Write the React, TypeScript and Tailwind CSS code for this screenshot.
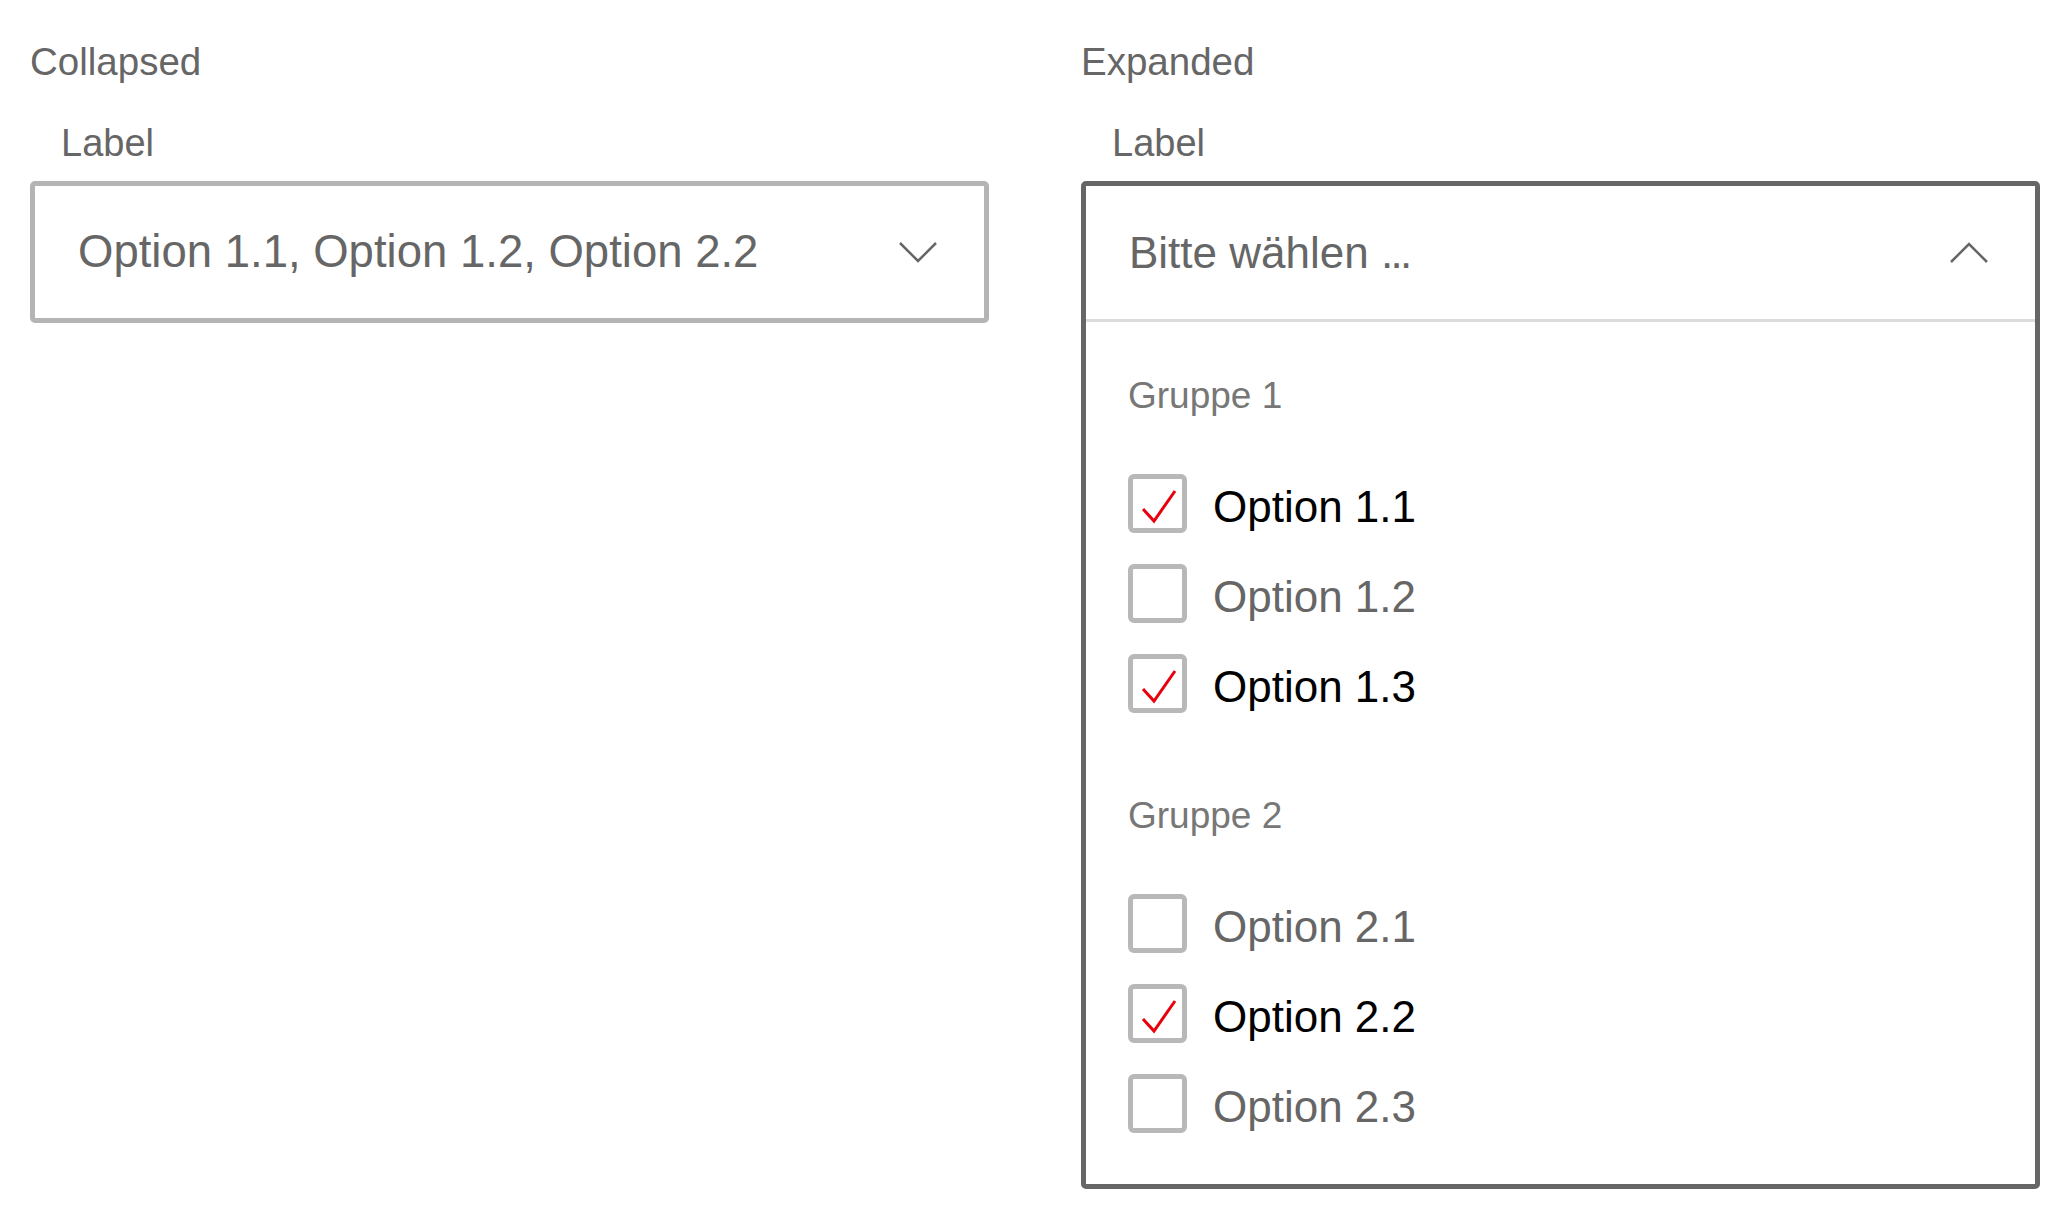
const groups = [
  {
    title: "Gruppe 1",
    options: [
      { label: "Option 1.1", checked: true },
      { label: "Option 1.2", checked: false },
      { label: "Option 1.3", checked: true },
    ],
  },
  {
    title: "Gruppe 2",
    options: [
      { label: "Option 2.1", checked: false },
      { label: "Option 2.2", checked: true },
      { label: "Option 2.3", checked: false },
    ],
  },
];

function Chevron({ up = false }: { up?: boolean }) {
  return (
    <svg width="40" height="24" viewBox="0 0 40 24" fill="none" className="shrink-0">
      <path
        d={up ? "M2 21 L20 3 L38 21" : "M2 3 L20 21 L38 3"}
        stroke="#666666"
        strokeWidth="2.5"
        strokeLinejoin="miter"
      />
    </svg>
  );
}

function Checkbox({ checked }: { checked: boolean }) {
  return (
    <div className="w-[59px] h-[59px] shrink-0 border-[5px] border-[#b8b8b8] rounded-[6px] bg-white">
      {checked && (
        <svg width="49" height="49" viewBox="0 0 49 49" fill="none">
          <polyline points="10,30 21,42 42,12" stroke="#e8000d" strokeWidth="3" />
        </svg>
      )}
    </div>
  );
}

export default function App() {
  return (
    <div className="min-h-screen bg-white font-['Liberation_Sans',Arial,sans-serif] flex gap-[92px] px-[30px] pt-[39px]">
      {/* Collapsed */}
      <div className="flex-1">
        <p className="text-[38.5px] leading-[46px] text-[#666]">Collapsed</p>
        <p className="mt-[35px] pl-[31px] text-[38px] leading-[46px] text-[#666]">Label</p>
        <div className="mt-[15px] h-[142px] border-[5px] border-[#b4b4b4] rounded-[5px] flex items-center justify-between pl-[43px] pr-[46px]">
          <span className="text-[45.5px] text-[#666]">Option 1.1, Option 1.2, Option 2.2</span>
          <Chevron />
        </div>
      </div>

      {/* Expanded */}
      <div className="flex-1">
        <p className="text-[38.5px] leading-[46px] text-[#666]">Expanded</p>
        <p className="mt-[35px] pl-[31px] text-[38px] leading-[46px] text-[#666]">Label</p>
        <div className="mt-[15px] border-[5px] border-[#666] rounded-[5px]">
          <div className="h-[133px] flex items-center justify-between pl-[43px] pr-[46px]">
            <span className="text-[44px] text-[#666]">
              Bitte wählen <span className="tracking-[-0.06em]">...</span>
            </span>
            <Chevron up />
          </div>
          <div className="h-[3px] bg-[#dcdcdc]" />
          <div className="pt-[52px] pb-[36px] pl-[42px] flex flex-col gap-[66px]">
            {groups.map((g) => (
              <div key={g.title}>
                <p className="text-[37px] leading-[44px] text-[#777] mb-[40px]">{g.title}</p>
                {g.options.map((o) => (
                  <div key={o.label} className="h-[90px] flex items-center gap-[26px]">
                    <Checkbox checked={o.checked} />
                    <span
                      className={
                        "text-[44px] leading-[52px] mt-[8px] " +
                        (o.checked ? "text-black" : "text-[#666]")
                      }
                    >
                      {o.label}
                    </span>
                  </div>
                ))}
              </div>
            ))}
          </div>
        </div>
      </div>
    </div>
  );
}
